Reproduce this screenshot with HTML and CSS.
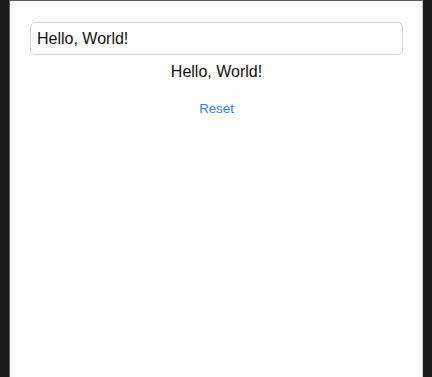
FILE: index.html
```html
<!DOCTYPE html>
<html lang="en">
<head>
  <meta charset="UTF-8">
  <title>Hello</title>
  <link rel="stylesheet" href="styles.css">
</head>
<body>
  <div id="app">
    <input type="text" id="name" value="Hello, World!" oninput="update()">
    <div id="label">Hello, World!</div>
    <button class="link" onclick="reset()">Reset</button>
  </div>
  <script>
    function update() {
      document.getElementById('label').textContent = document.getElementById('name').value;
    }
    function reset() {
      document.getElementById('name').value = 'Hello, World!';
      update();
    }
  </script>
</body>
</html>
```

FILE: styles.css
```css
html, body {
  margin: 0;
  height: 100%;
}
body {
  background: #1c1c1c;
  font-family: 'Liberation Sans', Arial, sans-serif;
  padding-left: 9px;
  box-sizing: border-box;
}
#app {
  width: 414px;
  height: 100%;
  box-sizing: border-box;
  background: #fdfdfb;
  border-top: 1px solid #5e5e5e;
  border-left: 1px solid #5e5e5e;
  border-right: 1px solid #c8c8c8;
  padding: 21px 19px 0 20px;
  display: flex;
  flex-direction: column;
  align-items: center;
}
#name {
  align-self: stretch;
  height: 33px;
  box-sizing: border-box;
  border: 1px solid #d5d5d5;
  border-radius: 5px;
  padding: 0 6px;
  font-family: inherit;
  font-size: 16px;
  color: #111;
  background: #fff;
  outline: none;
}
#label {
  margin-top: 7px;
  font-size: 16px;
  line-height: 19px;
  color: #111;
}
.link {
  margin-top: 20px;
  border: none;
  background: none;
  padding: 0;
  font-family: inherit;
  font-size: 13.3px;
  line-height: 16px;
  color: #2f7ff0;
  cursor: pointer;
}
```
